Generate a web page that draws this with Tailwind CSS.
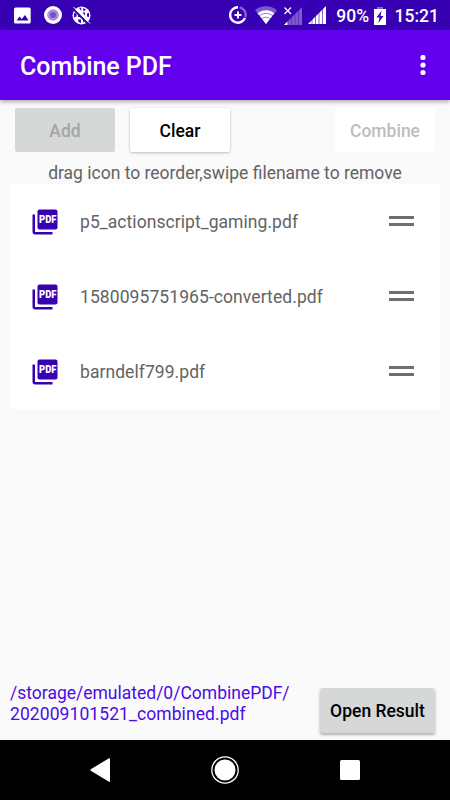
<!DOCTYPE html>
<html lang="en">

<head>
  <meta charset="UTF-8">
  <title>Combine PDF</title>
  <meta name="viewport" content="width=device-width, initial-scale=1.0">
  <script src="https://cdn.jsdelivr.net/npm/@tailwindcss/browser@4"></script>
</head>

<body class="w-[450px] h-[800px] flex flex-col overflow-hidden bg-[#fafafa] font-['Roboto',sans-serif] text-[17.5px] text-[#636363]">

  <!-- Status bar -->
  <div class="h-[30px] shrink-0 bg-[#3700b3] text-white flex items-center justify-between pl-[14px] pr-[11px]">
    <div class="flex items-center">
      <svg class="w-[17px] h-[17px]" viewBox="0 0 17 17">
        <rect x="0" y="0.5" width="16.7" height="16" rx="1.5" fill="#fff" />
        <path d="M2.5 13.5 5.5 9.5l2.3 2.6 3.2-4.2 3.6 5.6z" fill="#3700b3" />
      </svg>
      <svg class="w-[18px] h-[18px] ml-[12.5px]" viewBox="0 0 18 18">
        <circle cx="9" cy="9" r="9" fill="#fff" />
        <circle cx="9" cy="9" r="5.8" fill="#a78fdc" />
        <circle cx="9" cy="9" r="3" fill="#7a4fcb" />
      </svg>
      <svg class="w-[19px] h-[19px] ml-[10.5px]" viewBox="0 0 19 19" fill="none">
        <circle cx="9.5" cy="9.5" r="9" fill="#fff" />
        <g fill="#3700b3">
          <path d="M7 1.8h2.2v3.2zM11 2l3 1.5-2.5 2zM2 7l2.5.5v3L2 11.5zM6 7.5l3.5 3.5H6zM10.5 6.5h2.5v3zM15 7.5l2-.5v4l-2-.5zM6 13.5h3V17l-2.5-1zM11 13.5l1.5 1-1.5 2.5z" />
        </g>
        <path d="M0 1.8 17 18.8" stroke="#3700b3" stroke-width="2" />
        <path d="M1.5 1 18 17.5" stroke="#fff" stroke-width="1" />
      </svg>
    </div>
    <div class="flex items-center">
      <svg class="w-[18px] h-[18px]" viewBox="0 0 18 18" fill="none">
        <path d="M9 1.3a7.7 7.7 0 1 0 7 10.6" stroke="#fff" stroke-width="2.4" />
        <path d="M10.7 1.4A7.7 7.7 0 0 1 16.4 11" stroke="#fff" stroke-opacity=".4" stroke-width="2.4" />
        <path d="M9 5.5v7M5.5 9h7" stroke="#fff" stroke-width="2" />
      </svg>
      <svg class="w-[22px] h-[18px] ml-[8.5px]" viewBox="0 0 22 18">
        <path d="M11 18 0 4.2C6 -1 16 -1 22 4.2z" fill="#fff" fill-opacity=".35" />
        <path d="M11 18 2.6 7.3C7.5 3.3 14.5 3.3 19.4 7.3z" fill="#fff" />
        <path d="M3.8 10.1c4-3.5 10.4-3.5 14.4 0M6 13.2c3-2.5 7-2.5 10 0" fill="none" stroke="#3700b3" stroke-width=".5" />
      </svg>
      <svg class="w-[18px] h-[19px] ml-[7px]" viewBox="0 0 18 19">
        <path d="M18 1v18H0z" fill="#fff" fill-opacity=".35" />
        <path d="M0 19l3.5-3.5V19z" fill="#fff" />
        <path d="M4 12v7M7.5 9v10M11 5v14M14.5 2v17" stroke="#3700b3" stroke-opacity=".6" stroke-width=".7" />
        <path d="M.5 1.5l6.5 6.5M7 1.5l-6.5 6.5" stroke="#fff" stroke-width="1.3" />
      </svg>
      <svg class="w-[18px] h-[18px] ml-[6px]" viewBox="0 0 18 18">
        <path d="M18 0v18H0z" fill="#fff" />
        <path d="M4 10v8M7.5 7v11M11 4v14M14.5 1v17" stroke="#3700b3" stroke-width=".6" />
      </svg>
      <span class="ml-[10px] pt-[2px] leading-[28px] font-medium">90%</span>
      <svg class="w-[12px] h-[18px] mt-[1px] ml-[5px]" viewBox="0 0 12 18">
        <path d="M3 0h6v2H3z" fill="#fff" fill-opacity=".4" />
        <path d="M0 2h12v16H0z" fill="#fff" />
        <path d="M7.5 3.5 2.5 10.5h3L4.5 16l5-7h-3z" fill="#3700b3" />
      </svg>
      <span class="ml-[8.5px] pt-[2px] leading-[28px] font-medium">15:21</span>
    </div>
  </div>

  <!-- Toolbar -->
  <header class="relative h-[70px] shrink-0 bg-[#6200ee] text-white flex items-center justify-between pl-5 pr-[24.5px] shadow-[0_2px_4px_rgba(0,0,0,0.3)]">
    <h1 class="text-[25px] font-medium leading-[30px] pt-[3px] tracking-[-0.05px]">Combine PDF</h1>
    <svg class="w-[6px] h-5" viewBox="0 0 6 20" fill="#fff">
      <circle cx="3" cy="2.5" r="2.6" />
      <circle cx="3" cy="10" r="2.6" />
      <circle cx="3" cy="17.5" r="2.6" />
    </svg>
  </header>

  <!-- Actions -->
  <div class="flex pt-[8px] px-[15px] font-medium">
    <button class="w-[100px] h-[44px] pt-[2px] rounded-[2.5px] bg-[#d6d7d7] text-[#a5a6a6]" disabled>Add</button>
    <button class="w-[100px] h-[44px] pt-[2px] ml-[15px] rounded-[2.5px] bg-white text-black shadow-[0_1px_3px_rgba(0,0,0,0.25)]">Clear</button>
    <button class="w-[100px] h-[44px] pt-[2px] ml-auto rounded-[2.5px] bg-white text-[#bdbdbd]" disabled>Combine</button>
  </div>

  <p class="h-[32px] pt-[11px] text-center leading-[21px]">drag icon to reorder,swipe filename to remove</p>

  <!-- File list -->
  <ul class="mx-[10px] bg-white">
    <li class="h-[75px] flex items-center pl-5 pr-[26px]">
      <svg class="w-[30px] h-[30px]" viewBox="0 0 24 24" fill="#3700b3">
        <rect x="6" y="2" width="16" height="16" rx="1.6" />
        <path d="M4 6H2v14c0 1.1.9 2 2 2h14v-2H4z" />
        <text x="7.2" y="13" fill="#fff" font-size="8.4" font-weight="900" textLength="14" lengthAdjust="spacingAndGlyphs">PDF</text>
      </svg>
      <span class="ml-5 pt-[2px] tracking-[0.06px]">p5_actionscript_gaming.pdf</span>
      <div class="ml-auto mb-[1px] w-[25px] h-[10px] border-y-3 border-[#6f6f6f]"></div>
    </li>
    <li class="h-[75px] flex items-center pl-5 pr-[26px]">
      <svg class="w-[30px] h-[30px]" viewBox="0 0 24 24" fill="#3700b3">
        <rect x="6" y="2" width="16" height="16" rx="1.6" />
        <path d="M4 6H2v14c0 1.1.9 2 2 2h14v-2H4z" />
        <text x="7.2" y="13" fill="#fff" font-size="8.4" font-weight="900" textLength="14" lengthAdjust="spacingAndGlyphs">PDF</text>
      </svg>
      <span class="ml-5 pt-[2px] tracking-[0.08px]">1580095751965-converted.pdf</span>
      <div class="ml-auto mb-[1px] w-[25px] h-[10px] border-y-3 border-[#6f6f6f]"></div>
    </li>
    <li class="h-[75px] flex items-center pl-5 pr-[26px]">
      <svg class="w-[30px] h-[30px]" viewBox="0 0 24 24" fill="#3700b3">
        <rect x="6" y="2" width="16" height="16" rx="1.6" />
        <path d="M4 6H2v14c0 1.1.9 2 2 2h14v-2H4z" />
        <text x="7.2" y="13" fill="#fff" font-size="8.4" font-weight="900" textLength="14" lengthAdjust="spacingAndGlyphs">PDF</text>
      </svg>
      <span class="ml-5 pt-[2px] tracking-[0.06px]">barndelf799.pdf</span>
      <div class="ml-auto mb-[1px] w-[25px] h-[10px] border-y-3 border-[#6f6f6f]"></div>
    </li>
  </ul>

  <!-- Result -->
  <div class="mt-auto h-[60px] shrink-0 flex justify-between pl-[10px] pr-[15px]">
    <p class="pt-[3px] leading-[20.5px] text-[#4a0be6]">/storage/emulated/0/CombinePDF/<br><span class="tracking-[0.08px]">202009101521_combined.pdf</span></p>
    <button class="w-[115px] h-[45px] pt-[2px] mt-[8px] shrink-0 rounded-[2.5px] bg-[#d6d7d7] text-black font-medium shadow-[0_2px_3px_rgba(0,0,0,0.3)]">Open Result</button>
  </div>

  <!-- Navigation bar -->
  <nav class="h-[60px] shrink-0 bg-black flex items-center justify-between px-[90px]">
    <svg class="w-[20px] h-[26px]" viewBox="0 0 20 26" fill="#fff">
      <path d="M19 1.3Q20 .8 20 2v22q0 1.2-1 .7L.8 13.8q-1-.8 0-1.6z" />
    </svg>
    <svg class="w-[28px] h-[28px]" viewBox="0 0 28 28" fill="#fff">
      <circle cx="14" cy="14" r="13.2" fill="none" stroke="#fff" stroke-width="1.3" />
      <circle cx="14" cy="14" r="10.5" />
    </svg>
    <div class="w-5 h-5 rounded-[1.5px] bg-white"></div>
  </nav>

</body>

</html>
